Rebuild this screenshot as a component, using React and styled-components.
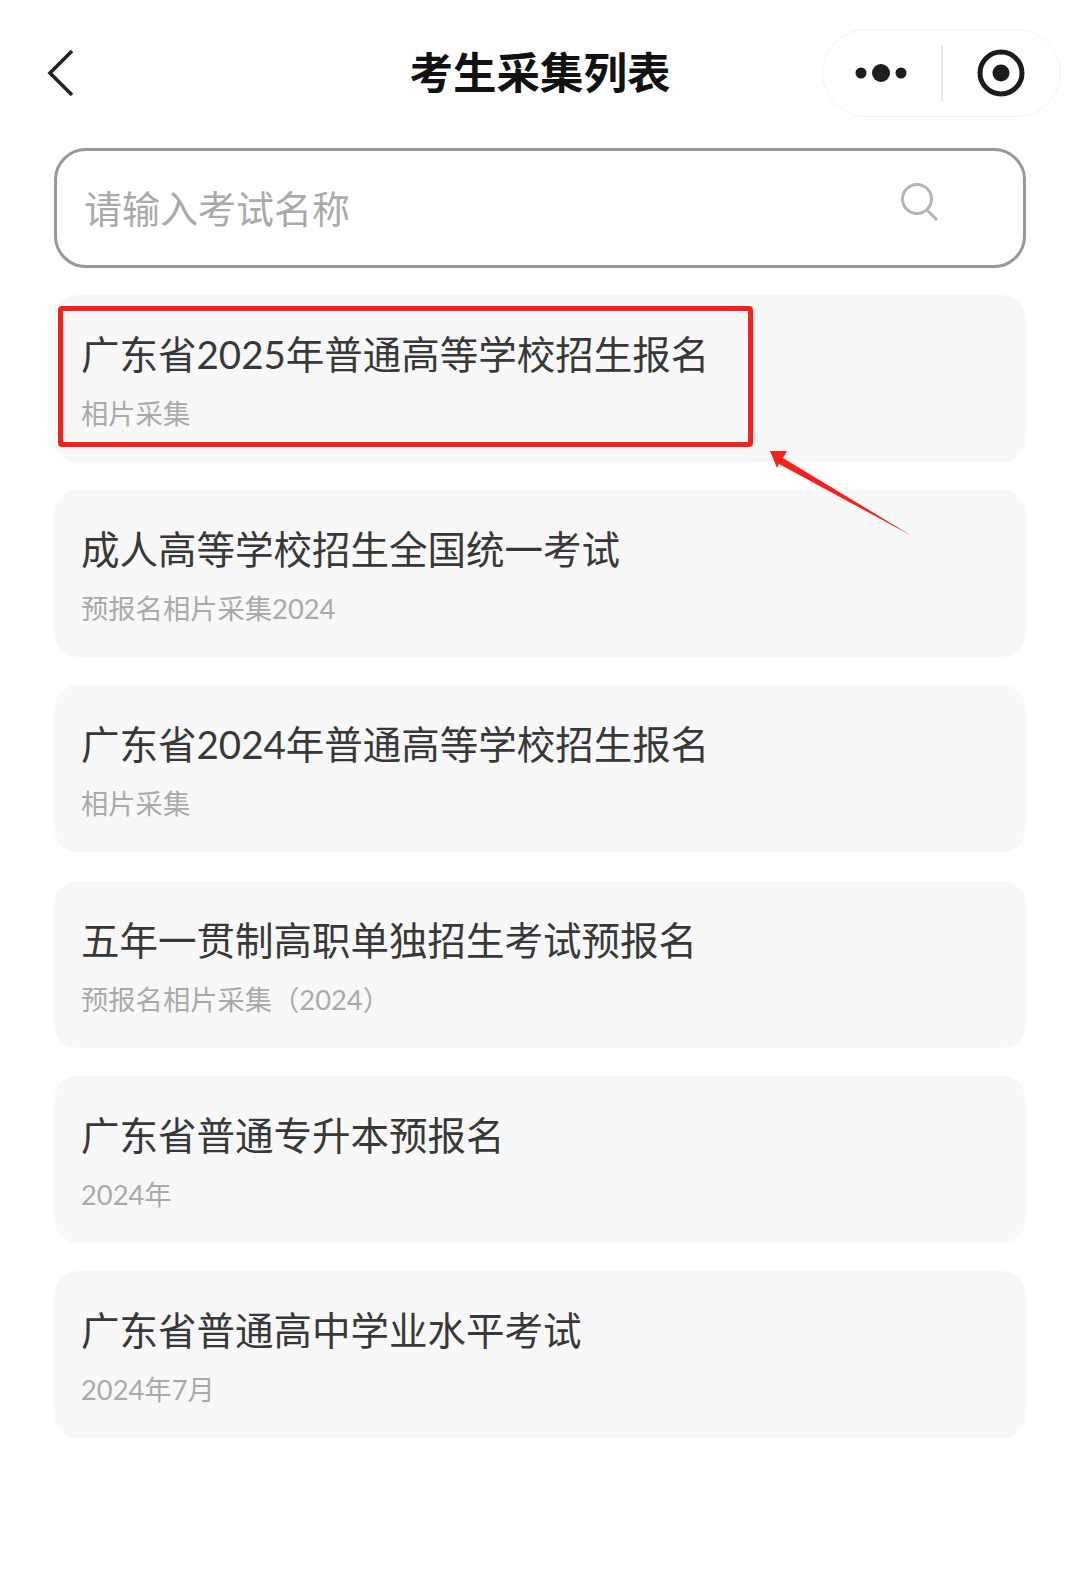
import React from "react";
import styled, { createGlobalStyle } from "styled-components";

const GlobalStyle = createGlobalStyle`
  html, body {
    margin: 0;
    padding: 0;
    background: #fff;
    font-family: "Lato", "Noto Sans CJK SC", sans-serif;
  }
`;

const Page = styled.div`
  width: 1080px;
  height: 1594px;
  overflow: hidden;
  background: #fff;
`;

const NavBar = styled.header`
  display: grid;
  grid-template-columns: 1fr auto 1fr;
  align-items: center;
  height: 88px;
  padding: 29px 19px 0;
`;

const BackIcon = styled.svg`
  width: 28px;
  height: 48px;
  display: block;
  margin-left: 28px;
`;

const Title = styled.h1`
  margin: 0;
  font-size: 43.5px;
  line-height: 1;
  font-weight: 700;
  color: #111;
`;

const Capsule = styled.div`
  justify-self: end;
  display: flex;
  align-items: center;
  width: 239px;
  height: 88px;
  box-sizing: border-box;
  border: 1px solid #f3f3f3;
  border-radius: 44px;
`;

const CapsuleSlot = styled.div`
  flex: 1;
  display: flex;
  align-items: center;
  justify-content: center;
`;

const CapsuleDivider = styled.div`
  width: 2px;
  height: 56px;
  background: #e8e8e8;
`;

const SearchBox = styled.div`
  display: flex;
  align-items: center;
  justify-content: space-between;
  box-sizing: border-box;
  width: 972px;
  height: 120px;
  margin: 31px 0 0 54px;
  padding: 0 83px 0 27px;
  border: 3px solid #999;
  border-radius: 32px;
`;

const Placeholder = styled.span`
  font-size: 38px;
  line-height: 1;
  color: #aaa;
`;

const SearchIcon = styled.svg`
  width: 40px;
  height: 40px;
  display: block;
  margin-top: -12px;
`;

const List = styled.div`
  display: flex;
  flex-direction: column;
  gap: 28.2px;
  margin: 27px 0 0 54px;
  width: 972px;
`;

const Card = styled.div`
  position: relative;
  box-sizing: border-box;
  height: 167px;
  padding: 36px 27px 0;
  background: #f8f8f8;
  border-radius: 24px;
`;

const CardTitle = styled.div`
  font-size: 38.5px;
  line-height: 46px;
  color: #383838;
  white-space: nowrap;
`;

const CardSub = styled.div`
  margin-top: 21px;
  font-size: 27.3px;
  line-height: 32px;
  color: #aaa;
  white-space: nowrap;
`;

const Highlight = styled.div`
  position: absolute;
  left: 4px;
  top: 11px;
  width: 695px;
  height: 141px;
  box-sizing: border-box;
  border: 5px solid #f5221b;
  border-radius: 4px;
`;

const Arrow = styled.svg`
  position: absolute;
  z-index: 2;
  left: 714px;
  top: 154px;
  width: 146px;
  height: 88px;
`;

const items = [
  { title: "广东省2025年普通高等学校招生报名", sub: "相片采集", marked: true },
  { title: "成人高等学校招生全国统一考试", sub: "预报名相片采集2024" },
  { title: "广东省2024年普通高等学校招生报名", sub: "相片采集" },
  { title: "五年一贯制高职单独招生考试预报名", sub: "预报名相片采集（2024）" },
  { title: "广东省普通专升本预报名", sub: "2024年" },
  { title: "广东省普通高中学业水平考试", sub: "2024年7月" },
];

const App = () => {
  return (
    <Page>
      <GlobalStyle />
      <NavBar>
        <BackIcon viewBox="0 0 28 48">
          <path d="M25 2 L3 24 L25 46" fill="none" stroke="#222" strokeWidth="3.6" />
        </BackIcon>
        <Title>考生采集列表</Title>
        <Capsule>
          <CapsuleSlot>
            <svg width="56" height="20" viewBox="0 0 56 20">
              <circle cx="7" cy="10" r="5.5" fill="#1c1c1c" />
              <circle cx="27" cy="10" r="9" fill="#1c1c1c" />
              <circle cx="47" cy="10" r="5.5" fill="#1c1c1c" />
            </svg>
          </CapsuleSlot>
          <CapsuleDivider />
          <CapsuleSlot>
            <svg width="48" height="48" viewBox="0 0 48 48">
              <circle cx="24" cy="24" r="21" fill="none" stroke="#1c1c1c" strokeWidth="5" />
              <circle cx="24" cy="24" r="8.5" fill="#1c1c1c" />
            </svg>
          </CapsuleSlot>
        </Capsule>
      </NavBar>

      <SearchBox>
        <Placeholder>请输入考试名称</Placeholder>
        <SearchIcon viewBox="0 0 40 40">
          <circle cx="17" cy="17" r="14.5" fill="none" stroke="#b4b4b4" strokeWidth="3" />
          <path d="M27 28 L37 38" fill="none" stroke="#b4b4b4" strokeWidth="3" />
        </SearchIcon>
      </SearchBox>

      <List>
        {items.map((item) => (
          <Card key={item.title}>
            <CardTitle>{item.title}</CardTitle>
            <CardSub>{item.sub}</CardSub>
            {item.marked && (
              <>
                <Highlight />
                <Arrow viewBox="0 0 146 88">
                  <path d="M2 2 L19 2 L15 9 L144 87 L11 15 L9 19 Z" fill="#f5221b" />
                </Arrow>
              </>
            )}
          </Card>
        ))}
      </List>
    </Page>
  );
};

export default App;
